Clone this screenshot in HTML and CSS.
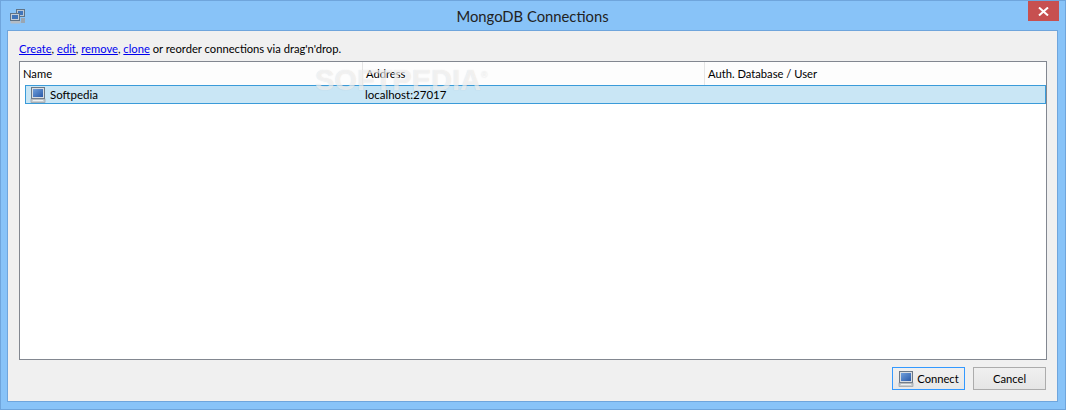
FILE: index.html
```html
<!DOCTYPE html>
<html lang="en">
<head>
<meta charset="utf-8">
<title>MongoDB Connections</title>
<link rel="stylesheet" href="styles.css">
</head>
<body>
<svg class="defs" width="0" height="0" aria-hidden="true">
  <defs>
    <linearGradient id="scr" x1="0" y1="0" x2="1" y2="1">
      <stop offset="0" stop-color="#6f9fdc"/>
      <stop offset="1" stop-color="#2a5aa8"/>
    </linearGradient>
    <symbol id="pc" viewBox="0 0 16 16">
      <rect x="1.5" y="0.5" width="13" height="11" fill="#d8dde2" stroke="#6b7886"/>
      <rect x="3" y="2" width="10" height="8" fill="url(#scr)"/>
      <rect x="1" y="12" width="14" height="3.5" fill="#c9cdd0" stroke="#8b9097" stroke-width="0.6"/>
      <rect x="3" y="13" width="10" height="1" fill="#eef0f1"/>
    </symbol>
  </defs>
</svg>
<div class="window">
  <header class="titlebar">
    <svg class="app-icon" viewBox="0 0 16 16" width="16" height="16">
      <rect x="6.5" y="1.5" width="8" height="7" fill="#b9c6d4" stroke="#5f7387"/>
      <rect x="8" y="3" width="5" height="4" fill="#3f74ba"/>
      <rect x="0.5" y="5.5" width="9" height="7" fill="#c3cdd8" stroke="#5f7387"/>
      <rect x="2" y="7" width="6" height="4" fill="#3f74ba"/>
      <rect x="0.5" y="13" width="10" height="2.5" fill="#b4bcc4"/>
      <rect x="11" y="10" width="4" height="5" fill="#9aa6b2"/>
    </svg>
    <h1 class="title">MongoDB Connections</h1>
    <div class="close"><svg viewBox="0 0 11 9" width="11" height="9"><path d="M1 0.5 L10 8.5 M10 0.5 L1 8.5" stroke="#fff" stroke-width="2" fill="none"/></svg></div>
  </header>
  <main class="content">
    <p class="intro"><a href="#">Create</a>, <a href="#">edit</a>, <a href="#">remove</a>, <a href="#">clone</a> or reorder connections via drag'n'drop.</p>
    <section class="list">
      <div class="columns head">
        <div class="col-name">Name</div>
        <div class="col-addr">Address</div>
        <div class="col-auth">Auth. Database / User</div>
      </div>
      <div class="columns row">
        <div class="col-name cell"><svg class="pc" width="16" height="16"><use href="#pc"/></svg>Softpedia</div>
        <div class="col-addr">localhost:27017</div>
        <div class="col-auth"></div>
      </div>
      <div class="watermark">SOFTPEDIA<sup>®</sup></div>
    </section>
    <footer class="actions">
      <button class="btn default"><svg class="pc" width="16" height="16"><use href="#pc"/></svg>Connect</button>
      <button class="btn">Cancel</button>
    </footer>
  </main>
</div>
</body>
</html>
```
FILE: styles.css
```css
* { box-sizing: border-box; }
html, body { margin: 0; padding: 0; }
body {
  width: 1066px;
  height: 410px;
  overflow: hidden;
  font-family: Lato, Roboto, sans-serif;
  font-size: 11.2px;
  color: #000;
}
.defs { position: absolute; }
.window {
  width: 1066px;
  height: 410px;
  background: #88c3f8;
  border: 1px solid #6fa5dc;
  display: flex;
  flex-direction: column;
  padding: 0 7px 7px 6px;
}
.titlebar {
  height: 29px;
  flex: none;
  display: flex;
  align-items: flex-start;
  position: relative;
}
.app-icon { margin: 7px 0 0 3px; flex: none; }
.title {
  position: absolute;
  left: 0;
  right: 0;
  top: 5px;
  margin: 0;
  text-align: center;
  font-size: 14.8px;
  line-height: 20px;
  font-weight: 400;
  color: #222;
}
.close {
  position: absolute;
  top: 0;
  right: -1px;
  width: 31px;
  height: 20px;
  background: #c75050;
  display: flex;
  align-items: center;
  justify-content: center;
}
.content {
  flex: 1;
  background: #f0f0f0;
  border: 1px solid #6fa5dc;
  padding: 10px 10px 11px 11px;
  display: flex;
  flex-direction: column;
}
.intro {
  margin: 0;
  height: 20px;
  line-height: 16px;
  white-space: nowrap;
}
.intro a { color: #0000ee; }
.list {
  flex: 1;
  background: #fff;
  border: 1px solid #828790;
  position: relative;
  overflow: hidden;
}
.columns {
  display: grid;
  grid-template-columns: 343px 342px 1fr;
  align-items: center;
}
.head {
  height: 23px;
  background: #fdfdfd;
}
.head > div {
  padding-left: 3px;
  height: 100%;
  line-height: 23px;
  border-right: 1px solid #e5e5e5;
}
.head > div:last-child { border-right: 0; }
.row {
  height: 19px;
  margin-left: 5px;
  background: #c9e6f5;
  border: 1px solid #3a9bd9;
  grid-template-columns: 336px 342px 1fr;
  font-size: 11.5px;
  line-height: 17px;
}
.cell {
  display: flex;
  align-items: center;
  gap: 4px;
  padding-left: 4px;
}
.col-addr { padding-left: 3px; }
.watermark {
  position: absolute;
  left: 295px;
  top: 1px;
  font-family: "Liberation Sans", sans-serif;
  font-size: 29px;
  font-weight: 700;
  line-height: 34px;
  color: rgba(255, 255, 255, 0.6);
  text-shadow: 0 0 1px rgba(120, 120, 120, 0.25);
  white-space: nowrap;
  pointer-events: none;
}
.watermark sup { font-size: 9px; font-weight: 400; vertical-align: 12px; line-height: 0; }
.actions {
  flex: none;
  height: 30px;
  padding: 7px 1px 0 0;
  display: flex;
  justify-content: flex-end;
  gap: 8px;
}
.btn {
  width: 73px;
  height: 23px;
  padding: 0;
  font: inherit;
  color: #000;
  background: linear-gradient(#f0f0f0, #e5e5e5);
  border: 1px solid #acacac;
  display: flex;
  align-items: center;
  justify-content: center;
  gap: 3px;
}
.btn.default {
  border: 1px solid #3399ff;
  background: linear-gradient(#f0f0f0, #e8e8e8);
}
.pc { flex: none; }
```
